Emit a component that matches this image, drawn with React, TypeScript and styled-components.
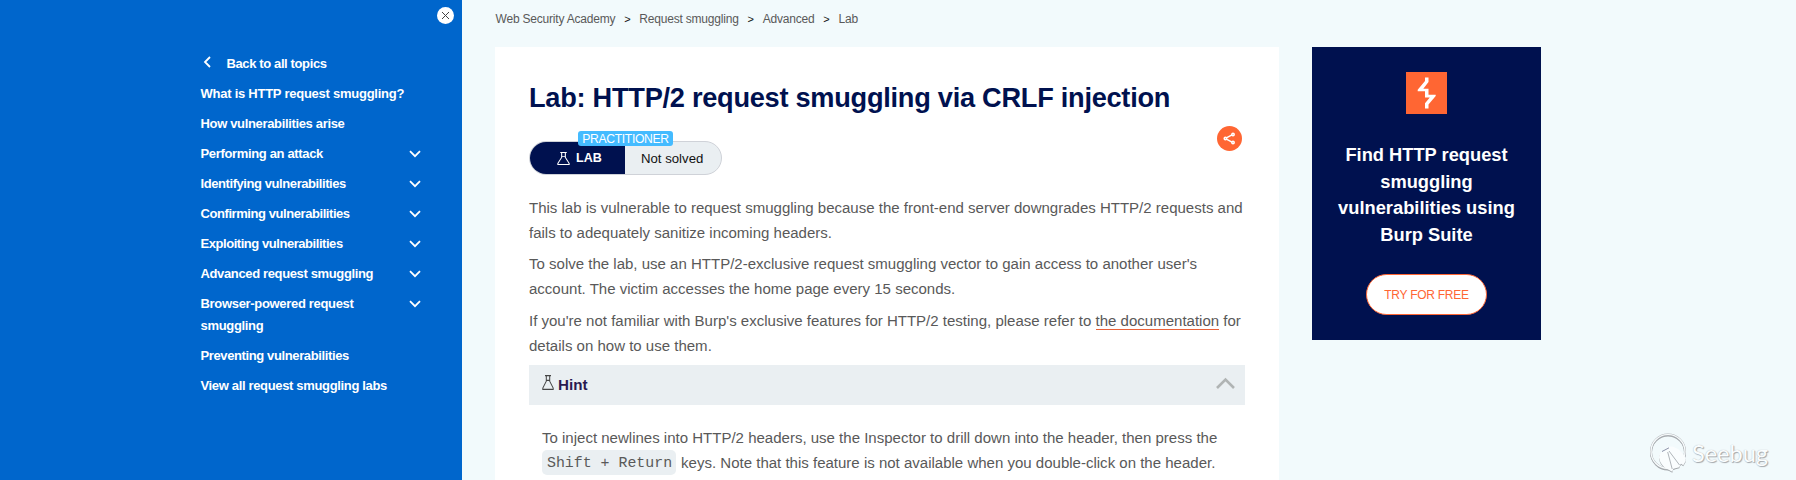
import React from 'react';
import styled, { createGlobalStyle } from 'styled-components';

const GlobalStyle = createGlobalStyle`
  * { box-sizing: border-box; }
  body {
    margin: 0;
    background: #f2fafc;
    font-family: "Liberation Sans", Arial, sans-serif;
    color: #595959;
    overflow: hidden;
  }
  h1, h2, h3, p, ul { margin: 0; padding: 0; }
`;

const Page = styled.div`
  display: flex;
  position: relative;
  height: 480px;
  overflow: hidden;
`;

const Sidebar = styled.nav`
  width: 462px;
  flex: none;
  background: #0066cc;
  color: #fff;
  display: flex;
  flex-direction: column;
`;

const CloseRow = styled.div`
  display: flex;
  justify-content: flex-end;
  height: 49px;
  padding: 7px 8px 0 0;
`;

const CloseButton = styled.button`
  width: 17px;
  height: 17px;
  padding: 0;
  border: 0;
  border-radius: 50%;
  background: #fff;
  display: flex;
  align-items: center;
  justify-content: center;
`;

const TopicList = styled.ul`
  list-style: none;
  margin-left: 200px;
  width: 222px;
`;

const Topic = styled.li`
  display: flex;
  justify-content: space-between;
  padding: 4px 0;
  font-size: 13px;
  line-height: 22px;
  font-weight: 700;
`;

const TopicLabel = styled.span<{ $tracking: number }>`
  padding-left: 0.5px;
  white-space: pre-line;
  letter-spacing: ${(p) => p.$tracking}px;
`;

const BackArrow = styled.svg`
  margin: 3px 15px 0 3px;
  flex: none;
`;

const BackTopic = styled(Topic)`
  justify-content: flex-start;
`;

const TopicChevron = styled.svg`
  margin: 7px 1px 0 0;
  flex: none;
`;

const Main = styled.main`
  margin-left: 33px;
  width: 784px;
  flex: none;
  display: flex;
  flex-direction: column;
`;

const Breadcrumbs = styled.div`
  display: flex;
  height: 47px;
  padding: 11px 0 0 0.5px;
  font-size: 12px;
  line-height: 16px;
  letter-spacing: -0.2px;
`;

const Separator = styled.span`
  width: 24px;
  text-align: center;
  font-size: 11px;
  color: #111;
`;

const Article = styled.article`
  background: #fff;
  padding: 34px 34px 0;
  flex: 1;
`;

const Title = styled.h1`
  color: #00114f;
  font-size: 27.2px;
  line-height: 34px;
  letter-spacing: -0.27px;
  white-space: nowrap;
`;

const StatusRow = styled.div`
  display: flex;
  justify-content: space-between;
  padding: 11px 3px 0 0;
  height: 80px;
`;

const Status = styled.div`
  position: relative;
  display: flex;
  width: 193px;
  height: 34px;
  margin-top: 15px;
  border: 1px solid #cfd2d8;
  border-radius: 17px;
  background: #eaeff2;
  font-size: 13.2px;
  line-height: 34px;
`;

const LabTag = styled.div`
  display: flex;
  align-items: center;
  width: 95px;
  padding-left: 27px;
  gap: 6px;
  border-radius: 16px 0 0 16px;
  background: #00114f;
  color: #fff;
  font-weight: 700;
  font-size: 12.5px;
`;

const State = styled.div`
  flex: 1;
  padding-left: 16px;
  color: #111;
  white-space: nowrap;
`;

const Level = styled.span`
  position: absolute;
  left: 48px;
  top: -11px;
  width: 95px;
  height: 15px;
  border-radius: 3px;
  background: #44bbff;
  color: #fff;
  font-size: 12.2px;
  line-height: 16px;
  letter-spacing: -0.35px;
  text-align: center;
`;

const ShareButton = styled.button`
  width: 25px;
  height: 25px;
  border: 0;
  border-radius: 50%;
  padding: 0;
  background: #ff6633;
  display: flex;
  align-items: center;
  justify-content: center;
`;

const Text = styled.p<{ $gap: number }>`
  font-size: 15.02px;
  line-height: 25px;
  margin-bottom: ${(p) => p.$gap}px;
  white-space: nowrap;
`;

const DocLink = styled.a`
  border-bottom: 1px solid #e8623a;
`;

const HintBar = styled.div`
  display: flex;
  align-items: flex-start;
  height: 40px;
  padding: 10px 10px 0 13px;
  background: #eaeff2;
`;

const HintTitle = styled.h3`
  flex: 1;
  margin-left: 4px;
  font-size: 15.2px;
  line-height: 20px;
  color: #2a1a50;
`;

const HintArrow = styled.svg`
  margin-top: 2px;
`;

const HintBody = styled.div`
  padding: 20px 0 0 13px;
`;

const Key = styled.kbd`
  display: inline-block;
  height: 25px;
  padding: 0 4px 0 5px;
  margin-right: 5px;
  border-radius: 5px;
  background: #eaeff2;
  font-family: "Liberation Mono", monospace;
  font-size: 14.9px;
  line-height: 26px;
  vertical-align: top;
`;

const Promo = styled.aside`
  margin: 47px 0 0 33px;
  width: 229px;
  height: 293px;
  padding-top: 25px;
  flex: none;
  background: #00114f;
  display: flex;
  flex-direction: column;
  align-items: center;
`;

const PromoTitle = styled.h2`
  margin: 28px 0 26px;
  color: #fff;
  font-size: 18.3px;
  line-height: 26.6px;
  text-align: center;
  white-space: pre-line;
`;

const TryButton = styled.button`
  width: 121px;
  height: 41px;
  padding: 0;
  border: 1px solid #ff6633;
  border-radius: 21px;
  background: #fff;
  color: #ff6633;
  font: 12px "Liberation Sans", Arial, sans-serif;
  letter-spacing: -0.26px;
`;

const Watermark = styled.div`
  position: absolute;
  left: 1648px;
  top: 432px;
  display: flex;
  align-items: center;
  gap: 4px;
  color: #fafdfe;
  font-family: Lato, sans-serif;
  font-size: 23.5px;
  line-height: 38px;
  text-shadow: 1px 1px 1px #a3a7ab, 0 0 1px #a9adb1;
`;

const BugMark = styled.svg`
  filter: drop-shadow(0.7px 1px 0.6px #a3a7ab);
`;

const topics: { label: string; tracking: number; expandable?: boolean }[] = [
  { label: 'What is HTTP request smuggling?', tracking: -0.25 },
  { label: 'How vulnerabilities arise', tracking: -0.34 },
  { label: 'Performing an attack', tracking: -0.34, expandable: true },
  { label: 'Identifying vulnerabilities', tracking: -0.42, expandable: true },
  { label: 'Confirming vulnerabilities', tracking: -0.43, expandable: true },
  { label: 'Exploiting vulnerabilities', tracking: -0.45, expandable: true },
  { label: 'Advanced request smuggling', tracking: -0.36, expandable: true },
  { label: 'Browser-powered request\nsmuggling', tracking: -0.32, expandable: true },
  { label: 'Preventing vulnerabilities', tracking: -0.38 },
  { label: 'View all request smuggling labs', tracking: -0.34 },
];

const crumbs = ['Web Security Academy', 'Request smuggling', 'Advanced', 'Lab'];

const Flask = ({ color, width, height }: { color: string; width: number; height: number }) => (
  <svg width={width} height={height} viewBox="0 0 12 14" preserveAspectRatio="none" fill="none" stroke={color}>
    <path d="M3 .6h6M4.3 .8v5L.8 12.2v1.2h10.4v-1.2L7.7 5.8v-5M3.8 5h4.4" strokeWidth="1" />
  </svg>
);

export default function App() {
  return (
    <Page>
      <GlobalStyle />
      <Sidebar>
        <CloseRow>
          <CloseButton aria-label="Close">
            <svg width="9" height="9" viewBox="0 0 9 9" stroke="#444" strokeWidth="1">
              <path d="M1 1l7 7M8 1L1 8" />
            </svg>
          </CloseButton>
        </CloseRow>
        <TopicList>
          <BackTopic>
            <BackArrow width="8" height="12" viewBox="0 0 8 12" fill="none" stroke="#fff" strokeWidth="1.8">
              <path d="M7 1L2 6l5 5" />
            </BackArrow>
            <TopicLabel $tracking={-0.38}>Back to all topics</TopicLabel>
          </BackTopic>
          {topics.map((t) => (
            <Topic key={t.label}>
              <TopicLabel $tracking={t.tracking}>{t.label}</TopicLabel>
              {t.expandable && (
                <TopicChevron width="12" height="8" viewBox="0 0 12 8" fill="none" stroke="#fff" strokeWidth="1.8">
                  <path d="M1 1.2l5 5 5-5" />
                </TopicChevron>
              )}
            </Topic>
          ))}
        </TopicList>
      </Sidebar>
      <Main>
        <Breadcrumbs>
          {crumbs.map((c, i) => (
            <React.Fragment key={c}>
              {i > 0 && <Separator>&gt;</Separator>}
              <span>{c}</span>
            </React.Fragment>
          ))}
        </Breadcrumbs>
        <Article>
          <Title>Lab: HTTP/2 request smuggling via CRLF injection</Title>
          <StatusRow>
            <Status>
              <LabTag>
                <Flask color="#fff" width={13} height={13} />
                LAB
              </LabTag>
              <State>Not solved</State>
              <Level>PRACTITIONER</Level>
            </Status>
            <ShareButton aria-label="Share">
              <svg width="13" height="13" viewBox="0 0 13 13" fill="none" stroke="#fff" strokeWidth="1.5">
                <path d="M3.4 5.8L9 2.9M3.4 7.2L9 10.1" />
                <circle cx="2.4" cy="6.5" r="1.2" />
                <circle cx="10" cy="2.5" r="1.2" />
                <circle cx="10" cy="10.5" r="1.2" />
              </svg>
            </ShareButton>
          </StatusRow>
          <Text $gap={6}>
            This lab is vulnerable to request smuggling because the front-end server downgrades HTTP/2 requests and
            <br />
            fails to adequately sanitize incoming headers.
          </Text>
          <Text $gap={7}>
            To solve the lab, use an HTTP/2-exclusive request smuggling vector to gain access to another user's
            <br />
            account. The victim accesses the home page every 15 seconds.
          </Text>
          <Text $gap={7}>
            If you're not familiar with Burp's exclusive features for HTTP/2 testing, please refer to{' '}
            <DocLink>the documentation</DocLink> for
            <br />
            details on how to use them.
          </Text>
          <HintBar>
            <Flask color="#444" width={12} height={15} />
            <HintTitle>Hint</HintTitle>
            <HintArrow width="19" height="12" viewBox="0 0 19 12" fill="none" stroke="#b0b4b4" strokeWidth="2.6">
              <path d="M1 11l8.5-8.5L18 11" />
            </HintArrow>
          </HintBar>
          <HintBody>
            <Text $gap={0}>
              To inject newlines into HTTP/2 headers, use the Inspector to drill down into the header, then press the
              <br />
              <Key>Shift + Return</Key>keys. Note that this feature is not available when you double-click on the header.
            </Text>
          </HintBody>
        </Article>
      </Main>
      <Promo>
        <svg width="41" height="42" viewBox="0 0 41 42">
          <path fill="#ff6633" d="M0 0h41v42H0z" />
          <path
            fill="#fff"
            d="M19 5.6h3.5V10l-5.2 6.7h5.2v6h7.2V24l-7.2 8.6v3.8H19v-5.2l4.8-5.7H19v-6.2h-7.3v-1.6L19 9z"
          />
        </svg>
        <PromoTitle>{'Find HTTP request\nsmuggling\nvulnerabilities using\nBurp Suite'}</PromoTitle>
        <TryButton>TRY FOR FREE</TryButton>
      </Promo>
      <Watermark>
        <BugMark width="40" height="42" viewBox="0 0 40 42" fill="none">
          <circle cx="20" cy="19.5" r="17" stroke="#b4b9bd" strokeWidth="2" />
          <circle cx="20" cy="19.5" r="17" stroke="#fafdfe" strokeWidth="1.2" />
          <path
            d="M11 25.7q0-4 2.7-5.7l6-5q4-1.500 7.500.7 6 2.500 8.200 6.600 2.500 3.500 2.300 6.700l-2.400 4.300-2.600-1.800-1.400 3.800-6 1.400-1 3L17 35.700q-5-4-6-10z"
            fill="#fafdfe"
          />
          <path d="M14 19.500l7-3.700" stroke="#8a91a8" />
          <path d="M19.700 20l4.500 17M21 19l10.500 14" stroke="#b0b5ba" />
        </BugMark>
        Seebug
      </Watermark>
    </Page>
  );
}
